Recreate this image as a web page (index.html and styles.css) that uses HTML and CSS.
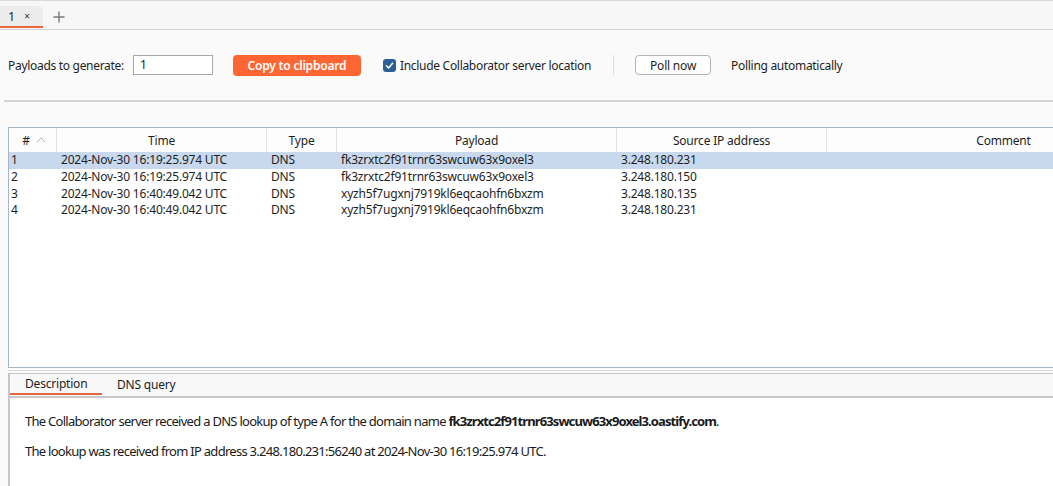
FILE: index.html
```html
<!DOCTYPE html>
<html>
<head>
<meta charset="utf-8">
<link rel="stylesheet" href="styles.css">
</head>
<body>
<div class="tabbar">
  <div class="tab"><span class="tab-num">1</span><span class="tab-x">×</span></div>
  <div class="tab-add">
    <svg width="12" height="12" viewBox="0 0 12 12"><path d="M6 0.5V11.5M0.5 6H11.5" stroke="#7a7a7a" stroke-width="1.4" fill="none"/></svg>
  </div>
</div>

<div class="toolbar">
  <span class="label">Payloads to generate:</span>
  <div class="input">1</div>
  <button class="btn-primary">Copy to clipboard</button>
  <label class="check">
    <svg width="13" height="13" viewBox="0 0 13 13"><rect x="0" y="0" width="13" height="13" rx="3" fill="#2c5f98"/><path d="M3.4 6.8L5.6 9L9.6 4.2" stroke="#fff" stroke-width="1.5" fill="none" stroke-linecap="round" stroke-linejoin="round"/></svg>
    <span>Include Collaborator server location</span>
  </label>
  <div class="sep"></div>
  <button class="btn">Poll now</button>
  <span class="label status">Polling automatically</span>
</div>

<div class="table">
  <div class="thead">
    <div class="th num">#
      <svg class="sort" width="10" height="6" viewBox="0 0 10 6"><path d="M0.8 5.2L5 1L9.2 5.2" stroke="#b4b4b4" stroke-width="1" fill="none"/></svg>
    </div>
    <div class="th">Time</div>
    <div class="th">Type</div>
    <div class="th">Payload</div>
    <div class="th">Source IP address</div>
    <div class="th last">Comment</div>
  </div>
  <div class="tr selected">
    <div class="td">1</div><div class="td">2024-Nov-30 16:19:25.974 UTC</div><div class="td">DNS</div><div class="td">fk3zrxtc2f91trnr63swcuw63x9oxel3</div><div class="td">3.248.180.231</div><div class="td"></div>
  </div>
  <div class="tr">
    <div class="td">2</div><div class="td">2024-Nov-30 16:19:25.974 UTC</div><div class="td">DNS</div><div class="td">fk3zrxtc2f91trnr63swcuw63x9oxel3</div><div class="td">3.248.180.150</div><div class="td"></div>
  </div>
  <div class="tr">
    <div class="td">3</div><div class="td">2024-Nov-30 16:40:49.042 UTC</div><div class="td">DNS</div><div class="td">xyzh5f7ugxnj7919kl6eqcaohfn6bxzm</div><div class="td">3.248.180.135</div><div class="td"></div>
  </div>
  <div class="tr">
    <div class="td">4</div><div class="td">2024-Nov-30 16:40:49.042 UTC</div><div class="td">DNS</div><div class="td">xyzh5f7ugxnj7919kl6eqcaohfn6bxzm</div><div class="td">3.248.180.231</div><div class="td"></div>
  </div>
</div>

<div class="divider"></div>

<div class="detail">
  <div class="detail-tabs">
    <div class="dtab active">Description</div>
    <div class="dtab">DNS query</div>
  </div>
  <div class="detail-body">
    <p>The Collaborator server received a DNS lookup of type A for the domain name <b>fk3zrxtc2f91trnr63swcuw63x9oxel3.oastify.com</b>.</p>
    <p>The lookup was received from IP address 3.248.180.231:56240 at 2024-Nov-30 16:19:25.974 UTC.</p>
  </div>
</div>
</body>
</html>
```

FILE: styles.css
```css
* { box-sizing: border-box; }
html, body { margin: 0; padding: 0; }
body {
  width: 1053px;
  height: 486px;
  overflow: hidden;
  background: #fafafa;
  font-family: "Noto Sans", sans-serif;
  font-size: 12px;
  color: #1e1e1e;
}

/* top tab bar */
.tabbar {
  height: 30px;
  border-top: 1px solid #d9d9d9;
  border-bottom: 1px solid #d2d2d2;
  display: flex;
  align-items: flex-end;
  background: #f7f7f7;
}
.tab {
  width: 43px;
  height: 22px;
  margin-bottom: 1px;
  background: #ececec;
  border-radius: 0 5px 0 0;
  border-bottom: 2px solid #e8683e;
  display: flex;
  align-items: center;
  padding-left: 8px;
  gap: 9px;
}
.tab-num { font-size: 12.5px; }
.tab-x { font-size: 10px; color: #333; }
.tab-add {
  margin-left: 10px;
  height: 22px;
  display: flex;
  align-items: center;
  padding-bottom: 3px;
}

/* toolbar */
.toolbar {
  height: 72px;
  margin-left: 4px;
  padding-left: 4px;
  border-bottom: 2px solid #d4d4d4;
  display: flex;
  align-items: center;
  letter-spacing: -0.3px;
}
.label { white-space: nowrap; }
.input {
  margin-left: 9px;
  width: 80px;
  height: 20px;
  background: #fff;
  border: 1px solid #a8a8a8;
  padding-left: 6px;
  line-height: 18px;
}
.btn-primary {
  margin-left: 20px;
  width: 128px;
  height: 21px;
  border: none;
  border-radius: 4px;
  background: #ff6633;
  color: #fff;
  font-family: inherit;
  font-size: 12px;
  font-weight: 600;
  letter-spacing: -0.2px;
  padding: 0;
}
.check {
  margin-left: 22px;
  display: flex;
  align-items: center;
  gap: 4px;
}
.check svg { display: block; }
.sep {
  margin-left: 22px;
  width: 1px;
  height: 20px;
  background: #dcdcdc;
}
.btn {
  margin-left: 21px;
  width: 76px;
  height: 20px;
  border: 1px solid #b4b4b4;
  border-radius: 4px;
  background: #fff;
  color: #1e1e1e;
  font-family: inherit;
  font-size: 12px;
  letter-spacing: -0.2px;
  padding: 0;
}
.status { margin-left: 20px; }

/* table */
.table {
  margin-top: 25px;
  margin-left: 8px;
  height: 241px;
  overflow: hidden;
  background: #fff;
  border-top: 1px solid #a3b7c8;
  border-left: 1px solid #a3b7c8;
  border-bottom: 1px solid #a3b7c8;
  letter-spacing: -0.2px;
}
.thead, .tr {
  display: grid;
  width: 1171px;
  grid-template-columns: 48px 210px 70px 280px 210px 353px;
}
.thead { height: 24px; background: #fdfdfd; }
.th {
  display: flex;
  align-items: center;
  justify-content: center;
  border-right: 1px solid #e2e2e2;
  white-space: nowrap;
}
.th.last { border-right: none; }
.th.num { gap: 6px; padding-left: 3px; }
.sort { display: block; margin-top: -1px; }
.tr { height: 16.7px; align-items: center; }
.tr.selected { background: #c9d9ed; }
.td {
  padding-left: 4px;
  white-space: nowrap;
  line-height: 16px;
}
.tr .td:first-child { padding-left: 2px; }

/* divider between panes */
.divider {
  margin-top: 2px;
  margin-left: 8px;
  height: 3px;
  border-top: 1px solid #d8d8d8;
}

/* detail pane */
.detail {
  margin-left: 8px;
  height: 113px;
  overflow: hidden;
  border-top: 1px solid #c6c6c6;
  border-left: 2px solid #c6c6c6;
  background: #fff;
}
.detail-tabs {
  height: 24px;
  display: flex;
  background: #f8f8f8;
  border-bottom: 2px solid #c8c8c8;
}
.dtab {
  height: 21px;
  padding: 0 15px 0 15px;
  display: flex;
  align-items: center;
  font-size: 12px;
  letter-spacing: -0.2px;
}
.dtab.active {
  border-bottom: 2px solid #e0693f;
  width: 92px;
}
.detail-body {
  padding: 15px 0 0 15px;
  font-size: 13px;
  letter-spacing: -0.72px;
  line-height: 16px;
  color: #1a1a1a;
}
.detail-body p { margin: 0 0 14px 0; white-space: nowrap; }
.detail-body b { font-weight: 700; letter-spacing: -0.9px; }
```
